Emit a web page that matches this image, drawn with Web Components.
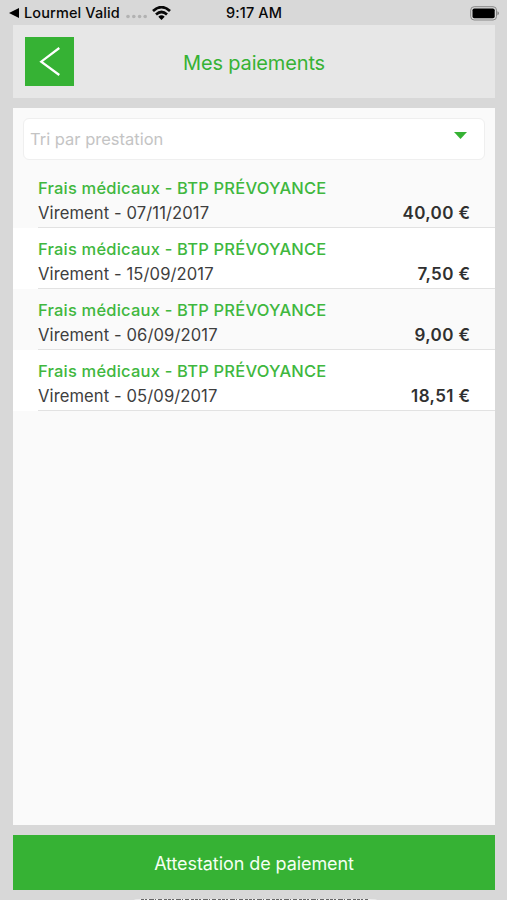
<!DOCTYPE html>
<html lang="fr">
<head>
<meta charset="utf-8">
<title>Mes paiements</title>
<style>
html,body{margin:0;height:900px;overflow:hidden;background:#d8d8d8;font-family:Inter,"Liberation Sans",sans-serif;color:#3e3e3e}
</style>
</head>
<body>
<payments-screen></payments-screen>
<script>
function define(name, html, setup) {
  const t = document.createElement('template');
  t.innerHTML = html;
  customElements.define(name, class extends HTMLElement {
    constructor() {
      super();
      this.attachShadow({mode: 'open'}).append(t.content.cloneNode(true));
    }
    connectedCallback() { if (setup) setup(this, this.shadowRoot); }
  });
}

define('status-bar', `<style>
:host{display:grid;grid-template-columns:1fr auto 1fr;align-items:center;height:25px;box-sizing:border-box;padding:1px 8px 0 9px;color:#080808;font-size:14.5px;font-weight:500;line-height:24px}
.left{display:flex;align-items:center}
.app{margin-left:5px;letter-spacing:.12px}
.dots{margin:6px 0 0 6px}.wifi{margin-left:5px}
.time{letter-spacing:.12px}
.battery{justify-self:end}
svg{display:block}
</style>
<div class="left"><svg width="10" height="10"><path d="M0 5L10 0V10Z"/></svg><span class="app">Lourmel Valid</span>
<svg class="dots" width="21" height="5" fill="#b2b2b2"><circle cx="2" cy="2.5" r="1.8"/><circle cx="7.8" cy="2.5" r="1.8"/><circle cx="13.6" cy="2.5" r="1.8"/><circle cx="19.2" cy="2.5" r="1.8"/></svg>
<svg class="wifi" width="19" height="14" viewBox="0 0 19 14"><g fill="none" stroke="#080808" stroke-width="2.7"><path d="M1 5Q9.500-2.700 18 5"/><path d="M4 8.500Q9.500 3.500 15 8.500"/></g><path d="M6.300 10.700Q9.500 8 12.700 10.700L9.500 13.900Z"/></svg></div>
<span class="time">9:17 AM</span>
<svg class="battery" width="29" height="15" viewBox="0 0 29 15"><rect x=".7" y=".7" width="25.800" height="13.300" rx="3.500" fill="none" stroke="#888"/><rect x="2.500" y="2.500" width="22.200" height="9.700" rx="1.800" fill="#000"/><path d="M27.400 5.300Q29 5.800 29 7.300T27.400 9.300Z" fill="#888"/></svg>`);

define('back-button', `<style>
:host{display:block;width:49px;height:49px;background:#36b234}svg{display:block}
</style><svg width="49" height="49" fill="none" stroke="#fff" stroke-width="2.200"><path d="M34.300 11L16.200 24.700L34.300 38"/></svg>`);

define('page-header', `<style>
:host{display:grid;grid-template-columns:49px 1fr 49px;align-items:center;height:73px;padding:0 12px;box-sizing:border-box;background:#e7e7e7}
h1{margin:0;text-align:center;font-size:20px;font-weight:400;line-height:24px;color:#36b234;letter-spacing:-.15px;padding-top:2px}
</style><back-button></back-button><h1><slot></slot></h1>`);

define('sort-select', `<style>
:host{display:flex;align-items:center;justify-content:space-between;height:42px;box-sizing:border-box;margin:0 10px;padding:0 17px 0 6px;background:#fff;border:1px solid #efefef;border-radius:6px;color:#c4c4c4;font-size:16.5px;line-height:22px}
svg{display:block;margin-bottom:7px}
</style><span><slot></slot></span><svg width="13" height="7"><path d="M0 0H13L6.500 7Z" fill="#36b234"/></svg>`);

define('payment-row', `<style>
:host{display:block;height:61px;box-sizing:border-box;padding-left:25px;background:var(--row-bg,#fff)}
.content{height:61px;box-sizing:border-box;border-bottom:1px solid #e2e2e2;padding:9px 25px 0 0}
.name{font-size:16.500px;line-height:24px;font-weight:450;color:#40b73e;white-space:nowrap;letter-spacing:.2px}
.detail{display:flex;justify-content:space-between;font-size:16.600px;line-height:25px;letter-spacing:.09px;padding-top:1px}
b{font-weight:600;color:#303030;font-size:17px;letter-spacing:.36px;margin-right:-.3px}
</style><div class="content"><div class="name"><slot></slot></div><div class="detail"><span id="date"></span><b id="amount"></b></div></div>`,
(host, root) => {
  root.getElementById('date').textContent = 'Virement - ' + host.getAttribute('date');
  root.getElementById('amount').textContent = host.getAttribute('amount');
});

define('action-button', `<style>
:host{display:flex;align-items:center;justify-content:center;height:55px;background:#36b234;color:#f4fff3;font-size:18px;line-height:24px;letter-spacing:-.08px}
span{padding-top:2px}
</style><span><slot></slot></span>`);

define('payments-screen', `<style>
:host{display:flex;flex-direction:column;height:900px;background:#d8d8d8}
main{display:flex;flex-direction:column;padding:0 12px 0 13px}
.panel{height:717px;box-sizing:border-box;padding-top:10px;margin:10px 0;background:#fafafa}
.rows{margin-top:7px}
payment-row:nth-child(odd){--row-bg:#fafafa}
payment-row:nth-child(even){--row-bg:#fff}
.edge{display:block;margin:6px 0 0 134px}
</style>
<status-bar></status-bar>
<main><page-header>Mes paiements</page-header>
<section class="panel"><sort-select>Tri par prestation</sort-select>
<div class="rows">
<payment-row date="07/11/2017" amount="40,00 €">Frais médicaux - BTP PRÉVOYANCE</payment-row>
<payment-row date="15/09/2017" amount="7,50 €">Frais médicaux - BTP PRÉVOYANCE</payment-row>
<payment-row date="06/09/2017" amount="9,00 €">Frais médicaux - BTP PRÉVOYANCE</payment-row>
<payment-row date="05/09/2017" amount="18,51 €">Frais médicaux - BTP PRÉVOYANCE</payment-row>
</div></section>
<action-button>Attestation de paiement</action-button></main>
<svg class="edge" width="243" height="4"><path d="M0 4Q1 3 8 3H235Q242 3 243 4Z" fill="#eee"/><path d="M7 3.500H234" stroke="#666" stroke-width="1" stroke-dasharray="3 1 2 2 5 1 1 2 4 2 3 1"/></svg>`);
</script>
</body>
</html>
